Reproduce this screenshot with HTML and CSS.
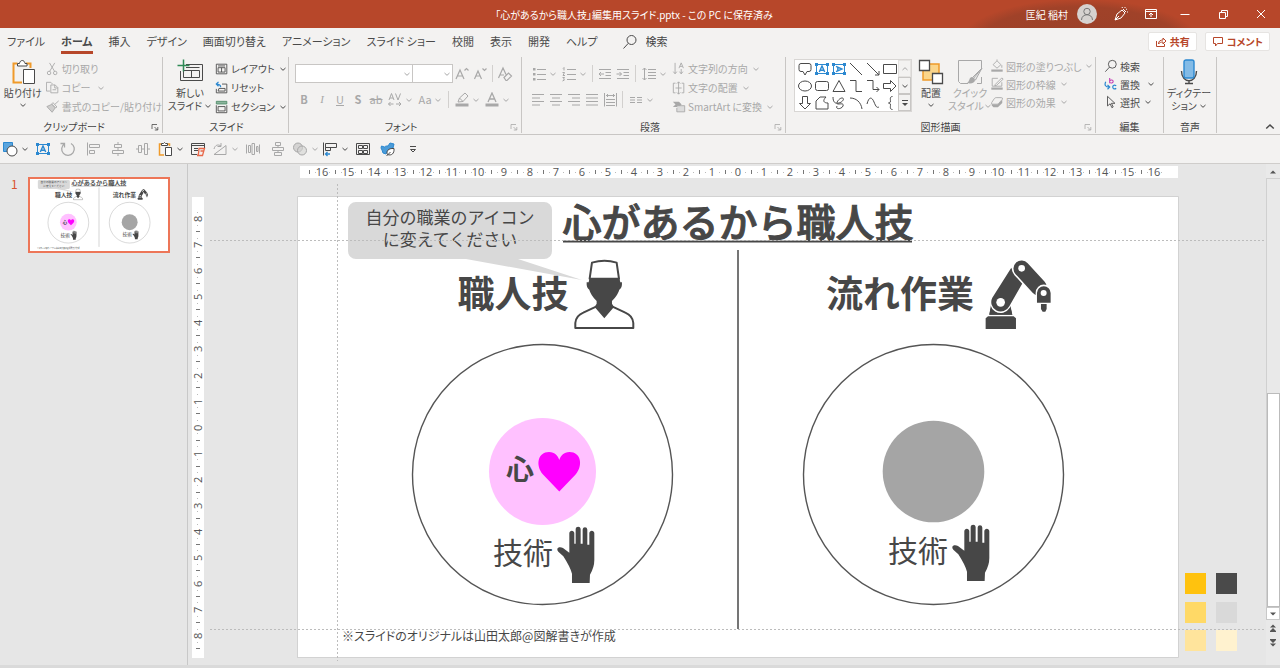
FILE: index.html
```html
<!DOCTYPE html>
<html lang="ja">
<head>
<meta charset="utf-8">
<meta name="viewport" content="width=device-width, initial-scale=1">
<title>「心があるから職人技」編集用スライド.pptx</title>
<link rel="stylesheet" href="styles.css">
</head>
<body>
<svg class="sprite" aria-hidden="true">
  <symbol id="chev" viewBox="0 0 8 8"><path d="M1.5 3l2.5 2.300L6.500 3"/></symbol>
  <symbol id="launch" viewBox="0 0 8 8"><path d="M1 6V1.500h5M3.500 4l3 3M6.800 4v3h-3" stroke-width=".8"/></symbol>
  <symbol id="lens" viewBox="0 0 16 16"><circle cx="9.500" cy="6" r="4.500"/><path d="M6.300 9.300L1.500 14.500"/></symbol>
  <symbol id="textbox" viewBox="0 0 16 16"><g stroke="#2b88d0"><path d="M2.500 3.500h11v9h-11z"/><path d="M5.300 11L8 5l2.700 6M6.300 9.200h3.400" stroke-width="1.400"/></g><path d="M1 2h3v3H1zM12 2h3v3h-3zM1 11h3v3H1zM12 11h3v3h-3z" fill="#2b88d0" stroke="none"/></symbol>
  <symbol id="align-obj" viewBox="0 0 16 16"><path d="M2.500 1.500v13M4.500 3.500h10v3h-10zM4.500 9.500h5v3h-5z"/></symbol>
  <g id="hand"><path d="M262 447C263 441 272 440 279 444L298 458V400C298 390 313 390 313 400V431H317V388C317 378 332 378 332 388V431H338V389C338 379 352 379 352 389V434H358V400C358 390 373 390 373 400V480Q373 502 360 524L359 549H306V521Q300 500 280 469L265 455Q261 451 262 447Z" fill="#474747"/></g>
</svg>

<header class="titlebar">
  <h1 class="doc-title">「心があるから職人技」編集用スライド.pptx - この PC に保存済み</h1>
  <div class="account">
    <span class="user">匡紀 稲村</span>
    <button class="avatar" aria-label="アカウント"><svg viewBox="0 0 20 20"><circle cx="10" cy="10" r="10" fill="#d6d2d0" stroke="none"/><circle cx="10" cy="7.500" r="3.200"/><path d="M4.500 16c0-7 11-7 11 0"/></svg></button>
    <button class="tb" aria-label="ペン"><svg class="ic" viewBox="0 0 16 16"><path d="M2 14l2-6 5-4 3 3-4 5zM2 14l4-4M10 3l3 3M12 1v1M14 3l-1 .5M9 1l.5 1M15 6h-1"/></svg></button>
    <button class="tb" aria-label="リボンの表示オプション"><svg class="ic" viewBox="0 0 16 16"><path d="M2.500 3.500h11v9h-11zM2.500 5.500h11M8 11V7M6 9l2-2 2 2"/></svg></button>
    <button class="win" aria-label="最小化"><svg class="ic" viewBox="0 0 16 16"><path d="M3.500 8.500h9"/></svg></button>
    <button class="win" aria-label="元に戻す"><svg class="ic" viewBox="0 0 16 16"><path d="M4.500 6.500h6v6h-6zM6.500 6V4.500h6v6H11"/></svg></button>
    <button class="win" aria-label="閉じる"><svg class="ic" viewBox="0 0 16 16"><path d="M4 4l8 8M12 4l-8 8"/></svg></button>
  </div>
</header>

<nav class="tabs">
  <button>ファイル</button><button class="active">ホーム</button><button>挿入</button><button>デザイン</button><button>画面切り替え</button><button>アニメーション</button><button>スライド ショー</button><button>校閲</button><button>表示</button><button>開発</button><button>ヘルプ</button>
  <label class="search"><svg class="ic"><use href="#lens"/></svg><input type="search" placeholder="検索" aria-label="検索"></label>
  <button class="pill"><svg class="ic12" viewBox="0 0 12 12"><path d="M1.500 5v5.500h8V8M3.500 8c0-3 2-4 4.500-4V2l3 3-3 3V6c-2 0-3.500.5-4.500 2z"/></svg>共有</button>
  <button class="pill"><svg class="ic12" viewBox="0 0 12 12"><path d="M1.500 1.500h9v6h-5l-2 2.500V7.500h-2z"/></svg>コメント</button>
</nav>

<section class="ribbon" aria-label="リボン">
  <div class="group g-clip">
    <div class="body">
      <button class="big"><svg class="ic26" viewBox="0 0 26 26"><path d="M12 23.500H3.500v-19h4M16 4.500h4.500V9" stroke="#f09a2a" stroke-width="2"/><path d="M7.500 7V4.500h2C10 .5 14.500.5 15 4.500h2V7z" fill="#fff"/><path d="M13.500 10.500h11v14h-11z" fill="#fff"/></svg><span>貼り付け</span><svg class="cv"><use href="#chev"/></svg></button>
      <div class="list off">
        <button><svg class="ic" viewBox="0 0 16 16"><path d="M4 1l6 10M10 1L4 11"/><circle cx="3.500" cy="12.500" r="2"/><circle cx="10.500" cy="12.500" r="2"/></svg>切り取り</button>
        <button><svg class="ic" viewBox="0 0 16 16"><path d="M4.500 11.500h-4v-10h5l2 2M5.500 4.500h5l3 3v6h-8zM10 4.500V8h3.500M7.500 10h4"/></svg>コピー<svg class="cv gap"><use href="#chev"/></svg></button>
        <button><svg class="ic" viewBox="0 0 16 16"><path d="M14.500 1L10 5M8 3l4.500 5-1.500 1L6.500 4.500z" /><path d="M6.500 5L1 7.500 7 14l3.500-5z" fill="#cfcecd"/></svg>書式のコピー/貼り付け</button>
      </div>
    </div>
    <h2>クリップボード</h2><button class="launcher" aria-label="クリップボードの設定"><svg class="cv"><use href="#launch"/></svg></button>
  </div>

  <div class="group g-slide">
    <div class="body">
      <button class="big"><svg class="ic26" viewBox="0 0 26 26"><path d="M9 5.500h16.500v16h-22V12"/><path d="M6.500 11.500h16v7h-16zM14.500 11.500v7M9 8.500h13.500"/><path d="M6.500.5v12M.5 6.500h12" stroke="#2f8a56" stroke-width="1.500"/></svg><span>新しい</span><span>スライド<svg class="cv"><use href="#chev"/></svg></span></button>
      <div class="list">
        <button><svg class="ic" viewBox="0 0 16 16"><path d="M1.500 2.500h12v11h-12zM3.500 4.500h8M3.500 6.500h8v5h-8zM7.500 6.500v5"/></svg>レイアウト<svg class="cv"><use href="#chev"/></svg></button>
        <button><svg class="ic" viewBox="0 0 16 16"><path d="M8 3.500h5.500v10h-12V9M4.500 8.500h7v3h-8z"/><path d="M6.500 7C6.500 4 4.500 3.500 1.500 3.500M4 1L1.500 3.500 4 6" stroke="#2b88d0" stroke-width="1.400"/></svg>リセット</button>
        <button><svg class="ic" viewBox="0 0 16 16"><path d="M1.500 1.500h12v3h-12z" fill="#8bb59c" stroke="#4f8a68"/><path d="M1.500 6v8.500h12V6M3.500 7.500h8v5h-8z"/></svg>セクション<svg class="cv"><use href="#chev"/></svg></button>
      </div>
    </div>
    <h2>スライド</h2>
  </div>

  <div class="group g-font off">
    <div class="body rows">
      <div class="row">
        <span class="combo name"><select aria-label="フォント"><option></option></select><svg class="cv"><use href="#chev"/></svg></span><span class="combo size"><select aria-label="フォント サイズ"><option></option></select><svg class="cv"><use href="#chev"/></svg></span>
        <button class="tool" aria-label="拡大"><svg class="ic" viewBox="0 0 16 16"><path d="M2 13L6 4l4 9M3.500 10h5M10.500 4.500l2-2 2 2" stroke-width="1.200"/></svg></button>
        <button class="tool" aria-label="縮小"><svg class="ic" viewBox="0 0 16 16"><path d="M2.500 13L6 5l3.500 8M3.500 10h5M10.500 2.500l2 2 2-2" stroke-width="1.200"/></svg></button>
        <i class="sep"></i>
        <button class="tool" aria-label="書式のクリア"><svg class="ic" viewBox="0 0 16 16"><path d="M1.500 12L6 2l3 6.500M3 9h4M7 11.500L11.500 7l3 3-4.500 4.500H9z" stroke-width="1.200"/></svg></button>
      </div>
      <div class="row">
        <button class="tool b">B</button><button class="tool i">I</button><button class="tool u">U</button><button class="tool b">S</button><button class="tool s">ab</button>
        <button class="tool wide" aria-label="文字の間隔"><svg class="ic" viewBox="0 0 16 16"><path d="M2 8l2.500-6.500L7 8M3 6h3M8.500 1.500L11 8l2.500-6.500M1.500 12h5M9 12h5M3.500 10l-2 2 2 2M12 10l2 2-2 2"/></svg><svg class="cv"><use href="#chev"/></svg></button>
        <button class="tool wide">Aa<svg class="cv"><use href="#chev"/></svg></button>
        <i class="sep"></i>
        <button class="tool wide" aria-label="蛍光ペン"><svg class="ic" viewBox="0 0 16 16"><path d="M4 10l1.500-4L11 1l3 3-5 5.500zM5.500 6L9 9.500"/><path d="M1.500 11.500h13v3h-13z" class="solid"/></svg><svg class="cv"><use href="#chev"/></svg></button>
        <button class="tool wide" aria-label="フォントの色"><svg class="ic" viewBox="0 0 16 16"><path d="M4 10l4-9 4 9M5.500 7h5" stroke-width="1.300"/><path d="M1.500 11.500h13v3h-13z" class="solid"/></svg><svg class="cv"><use href="#chev"/></svg></button>
      </div>
    </div>
    <h2>フォント</h2><button class="launcher" aria-label="フォントの設定"><svg class="cv"><use href="#launch"/></svg></button>
  </div>

  <div class="group g-para off">
    <div class="body">
      <div class="rows">
        <div class="row">
          <button class="tool wide" aria-label="箇条書き"><svg class="ic" viewBox="0 0 16 16"><path d="M6 3.500h9M6 8.500h9M6 13.500h9"/><path d="M2 2h2.500v2.500H2zM2 7h2.500v2.500H2zM2 12h2.500v2.500H2z" class="solid"/></svg><svg class="cv"><use href="#chev"/></svg></button>
          <button class="tool wide" aria-label="段落番号"><svg class="ic" viewBox="0 0 16 16"><path d="M6 3.500h9M6 8.500h9M6 13.500h9M2 2.500l1-1v3M1.500 6.500h2L2 9.500h2M1.500 11.500h2l-1 1.500 1 1-2 1"/></svg><svg class="cv"><use href="#chev"/></svg></button>
          <i class="sep"></i>
          <button class="tool" aria-label="インデントを減らす"><svg class="ic" viewBox="0 0 16 16"><path d="M2 3.500h12M8.500 6.500H14M8.500 9.500H14M2 12.500h12M7 8H2M4 6L2 8l2 2"/></svg></button>
          <button class="tool" aria-label="インデントを増やす"><svg class="ic" viewBox="0 0 16 16"><path d="M2 3.500h12M8.500 6.500H14M8.500 9.500H14M2 12.500h12M1.500 8h5M4.500 6l2 2-2 2"/></svg></button>
          <i class="sep"></i>
          <button class="tool wide" aria-label="行間"><svg class="ic" viewBox="0 0 16 16"><path d="M7 3.500h8M7 6.500h8M7 9.500h8M7 12.500h8M3.500 2v12M1.500 4l2-2 2 2M1.500 12l2 2 2-2"/></svg><svg class="cv"><use href="#chev"/></svg></button>
        </div>
        <div class="row">
          <button class="tool" aria-label="左揃え"><svg class="ic" viewBox="0 0 16 16"><path d="M2 2.500h12M2 6h8M2 9.500h12M2 13h8"/></svg></button>
          <button class="tool" aria-label="中央揃え"><svg class="ic" viewBox="0 0 16 16"><path d="M2 2.500h12M4 6h8M2 9.500h12M4 13h8"/></svg></button>
          <button class="tool" aria-label="右揃え"><svg class="ic" viewBox="0 0 16 16"><path d="M2 2.500h12M6 6h8M2 9.500h12M6 13h8"/></svg></button>
          <button class="tool" aria-label="両端揃え"><svg class="ic" viewBox="0 0 16 16"><path d="M2 2.500h12M2 6h12M2 9.500h12M2 13h12"/></svg></button>
          <button class="tool" aria-label="均等割り付け"><svg class="ic" viewBox="0 0 16 16"><path d="M2.500 1v13.500M14.500 1v13.500M4 3.500h9M6 2L4.500 3.500 6 5M11 2l1.500 1.500L11 5M4 7.500h9M4 10.500h9M4 13.500h9"/></svg></button>
          <i class="sep"></i>
          <button class="tool wide" aria-label="段組み"><svg class="ic" viewBox="0 0 16 16"><path d="M2 5.500h5M2 8h5M2 10.500h5M9 5.500h5M9 8h5M9 10.500h5"/></svg><svg class="cv"><use href="#chev"/></svg></button>
        </div>
      </div>
      <div class="list">
        <button><svg class="ic" viewBox="0 0 16 16"><path d="M3.500 1v12M1.500 11l2 2.500 2-2.500M10.500 8v5.500M8.500 11l2 2.500 2-2.500M8 7l2.500-6L13 7M9 5h3"/></svg>文字列の方向<svg class="cv"><use href="#chev"/></svg></button>
        <button><svg class="ic" viewBox="0 0 16 16"><path d="M4 2.500H1.500v11H4M11 2.500h2.500v11H11M7.500 1v14M5.500 3l2-2 2 2M5.500 13l2 2 2-2M4 8h7"/></svg>文字の配置<svg class="cv"><use href="#chev"/></svg></button>
        <button><svg class="ic" viewBox="0 0 16 16"><path d="M1 2h7l3 3-3 3H1l3-3z" class="solid"/><path d="M6.500 6.500h8v7h-9V9" fill="#dcdcdc"/></svg>SmartArt に変換<svg class="cv"><use href="#chev"/></svg></button>
      </div>
    </div>
    <h2>段落</h2><button class="launcher" aria-label="段落の設定"><svg class="cv"><use href="#launch"/></svg></button>
  </div>

  <div class="group g-draw">
    <div class="body">
      <div class="gallery">
        <div class="shapes">
          <button aria-label="吹き出し"><svg class="ic" viewBox="0 0 16 16"><path d="M4 2.500h8q2 0 2 2v4q0 2-2 2h-2L8 14l-2-3.500H4q-2 0-2-2v-4q0-2 2-2z"/></svg></button>
          <button aria-label="テキスト ボックス"><svg class="ic"><use href="#textbox"/></svg></button>
          <button aria-label="縦書き"><svg class="ic" viewBox="0 0 16 16"><g stroke="#2b88d0"><path d="M2.500 3.500h11v9h-11z"/><path d="M5 5.300L11 8l-6 2.700M6.800 6.300v3.400" stroke-width="1.400"/></g><path d="M1 2h3v3H1zM12 2h3v3h-3zM1 11h3v3H1zM12 11h3v3h-3z" fill="#2b88d0" stroke="none"/></svg></button>
          <button aria-label="線"><svg class="ic" viewBox="0 0 16 16"><path d="M2 2l12 12"/></svg></button>
          <button aria-label="矢印"><svg class="ic" viewBox="0 0 16 16"><path d="M2 2l12 12M14 10v4h-4"/></svg></button>
          <button aria-label="四角形"><svg class="ic" viewBox="0 0 16 16"><path d="M1.500 3.500h13v9h-13z"/></svg></button>
          <button aria-label="楕円"><svg class="ic" viewBox="0 0 16 16"><ellipse cx="8" cy="8" rx="6.500" ry="5"/></svg></button>
          <button aria-label="角丸四角形"><svg class="ic" viewBox="0 0 16 16"><rect x="1.500" y="3.500" width="13" height="9" rx="2"/></svg></button>
          <button aria-label="三角形"><svg class="ic" viewBox="0 0 16 16"><path d="M8 2.500l6 11H2z"/></svg></button>
          <button aria-label="カギ線"><svg class="ic" viewBox="0 0 16 16"><path d="M2 2.500h6v11h6"/></svg></button>
          <button aria-label="カギ線矢印"><svg class="ic" viewBox="0 0 16 16"><path d="M2 2.500h6v9h6M11.500 9l2.500 2.500-2.500 2.500"/></svg></button>
          <button aria-label="右矢印"><svg class="ic" viewBox="0 0 16 16"><path d="M1.500 5.500h7v-3L14 8l-5.500 5.500v-3h-7z"/></svg></button>
          <button aria-label="下矢印"><svg class="ic" viewBox="0 0 16 16"><path d="M5.500 1.500v7h-3L8 14l5.500-5.500h-3v-7z"/></svg></button>
          <button aria-label="フリーフォーム"><svg class="ic" viewBox="0 0 16 16"><path d="M2 14V6l4-4h6c-4 4-2 6 2 6v6z"/></svg></button>
          <button aria-label="フリーハンド"><svg class="ic" viewBox="0 0 16 16"><path d="M2 2c0 5 2 7 6 6s6-5 3-5-7 6-4 6 6-1 5 2-8 4-6 0"/></svg></button>
          <button aria-label="円弧"><svg class="ic" viewBox="0 0 16 16"><path d="M2 3c6 0 11 4 12 11"/></svg></button>
          <button aria-label="曲線"><svg class="ic" viewBox="0 0 16 16"><path d="M2 9c2-8 5-7 7-2s3 6 5 5"/></svg></button>
          <button aria-label="左中かっこ"><svg class="ic" viewBox="0 0 16 16"><path d="M10.500 1.500c-3 0-2 3-2 4.500S7.500 8 6.500 8c1 0 2 .5 2 2s-1 4.500 2 4.500"/></svg></button>
        </div>
        <div class="pager">
          <button class="dis" aria-label="前へ"><svg class="cv flip"><use href="#chev"/></svg></button>
          <button aria-label="次へ"><svg class="cv"><use href="#chev"/></svg></button>
          <button aria-label="その他"><svg class="cv" viewBox="0 0 8 8"><path d="M1 1.500h6"/><path d="M1 4h6L4 7z" class="solid"/></svg></button>
        </div>
      </div>
      <button class="big arrange"><svg class="ic26" viewBox="0 0 26 26"><path d="M5 5h16v16H5z" fill="#fbd58a" stroke="#f09a2a" stroke-width="1.500"/><path d="M1.500 1.500h10v10h-10zM14.500 14.500h10v10h-10z" fill="#fff" stroke-width="1.300"/></svg><span>配置</span><svg class="cv"><use href="#chev"/></svg></button>
      <button class="big dis quick"><svg class="ic26" viewBox="0 0 26 26"><path d="M11 24.500H3.500L1.500 22.500V1.500h23v8M24.500 18v6.500H20"/><path d="M25 9L16 20M25 9l-6.500 12-3-2.500z" fill="#e8e8e8"/><path d="M15 18c-3 0-2 4-5 6 4 1 8 0 8-3z" class="solid"/></svg><span>クイック</span><span>スタイル<svg class="cv"><use href="#chev"/></svg></span></button>
      <div class="list dis tight">
        <button><svg class="ic" viewBox="0 0 16 16"><path d="M3.500 6.500L8 2l4.500 4.500L8 10.500zM8 2V.5M13.500 7v3"/><path d="M1.500 12h13v2.500h-13z" class="solid"/></svg>図形の塗りつぶし<svg class="cv"><use href="#chev"/></svg></button>
        <button><svg class="ic" viewBox="0 0 16 16"><path d="M9 1.500H2.500v9h11V6M6 8.500L13.500 1l1.500 1.500L7.500 9.500l-2 .5z"/><path d="M1.500 12h13v2.500h-13z" class="solid"/></svg>図形の枠線<svg class="cv"><use href="#chev"/></svg></button>
        <button><svg class="ic" viewBox="0 0 16 16"><path d="M2 9.500V12l2 2h5l5-5V5L9 10.500H3z" class="solid"/><path d="M7 3h6q2 0 1 2L10 9.500q-1 1-2 1H3q-2 0-1-2L5 4q1-1 2-1z" fill="#f3f2f1"/></svg>図形の効果<svg class="cv"><use href="#chev"/></svg></button>
      </div>
    </div>
    <h2>図形描画</h2><button class="launcher dis" aria-label="図形描画の設定"><svg class="cv"><use href="#launch"/></svg></button>
  </div>

  <div class="group g-edit">
    <div class="body">
      <div class="list tight">
        <button><svg class="ic"><use href="#lens"/></svg>検索</button>
        <button><svg class="ic" viewBox="0 0 16 16"><path d="M6.500 1v6M6.500 4.500c1.500-2 4-1 4 .7s-2.500 2.500-4 .8" stroke="#c239b3" stroke-width="1.200"/><path d="M14 10c-3-1.500-4 0-4 1.500s1.500 3 4 1.500M2 5.500c-2 4 0 6 4 6M4 9l2.500 2.500L4 14" stroke="#2b88d0" stroke-width="1.400"/></svg>置換<svg class="cv gap"><use href="#chev"/></svg></button>
        <button><svg class="ic" viewBox="0 0 16 16"><path d="M4 1.500v11l3-2.500 2 4.500 1.500-.8L8.500 9.500h4z"/></svg>選択<svg class="cv"><use href="#chev"/></svg></button>
      </div>
    </div>
    <h2>編集</h2>
  </div>

  <div class="group g-voice">
    <div class="body">
      <button class="big"><svg class="ic26" viewBox="0 0 26 26"><path d="M5.500 12c0 13 15 13 15 0M13 22v3M9 24.500h8" stroke-width="1.400"/><rect x="8" y="1" width="10" height="18" rx="2" fill="#83bbe6" stroke="#2b88d0" stroke-width="1.400"/></svg><span>ディクテー</span><span>ション<svg class="cv"><use href="#chev"/></svg></span></button>
    </div>
    <h2>音声</h2>
  </div>
  <button class="collapse" aria-label="リボンを折りたたむ"><svg class="ic12 flip" viewBox="0 0 8 8"><use href="#chev"/></svg></button>
</section>

<div class="qat" role="toolbar" aria-label="クイック アクセス">
  <button class="split" aria-label="図形"><svg class="ic" viewBox="0 0 16 16"><path d="M1.500 1.500h9v9h-9z" fill="#5aa5de" stroke="#2b88d0"/><circle cx="10" cy="10" r="5" fill="#fff"/></svg><svg class="cv"><use href="#chev"/></svg></button>
  <button aria-label="テキスト ボックス"><svg class="ic"><use href="#textbox"/></svg></button>
  <button class="dis" aria-label="繰り返し"><svg class="ic" viewBox="0 0 16 16"><path d="M11 2.500a6.300 6.300 0 1 1-6.500.3M4.500 6.500v-4h-4" stroke-width="1.300"/></svg></button>
  <button class="dis" aria-label="左揃え"><svg class="ic"><use href="#align-obj"/></svg></button>
  <button class="dis" aria-label="左右中央揃え"><svg class="ic" viewBox="0 0 16 16"><path d="M8 1v2M8 7v2M8 13v2M4.500 3.500h7v3h-7zM2.500 9.500h11v3h-11z"/></svg></button>
  <button class="dis" aria-label="上下中央揃え"><svg class="ic" viewBox="0 0 16 16"><path d="M1 8h2M7 8h2M13 8h2M3.500 4.500h3v7h-3zM9.500 2.500h3v11h-3z"/></svg></button>
  <button class="split" aria-label="貼り付け"><svg class="ic" viewBox="0 0 16 16"><path d="M7 14H2.500V3H5M10 3h2.500v2" stroke="#f09a2a" stroke-width="1.500"/><path d="M4.500 4.500v-2h2q1-2 2 0h2v2zM8.500 6.500h6v8h-6z" fill="#fff"/></svg><svg class="cv"><use href="#chev"/></svg></button>
  <button aria-label="選択ウィンドウ"><svg class="ic" viewBox="0 0 16 16"><path d="M7 13.500H1.500v-11h13V7M1.500 4.500h13M4 7.500h4M4 9.500h4"/><path d="M9 7.500h5.500l-2 7H7c2 0 1.500-3 2-7zM10.500 10h3" stroke="#e8684a" stroke-width="1.300"/></svg></button>
  <button class="split dis" aria-label="回転"><svg class="ic" viewBox="0 0 16 16"><path d="M2 13.500h12v-9zM2 8c1-4 4-5 7-3M9 2v3.500H5.500"/></svg><svg class="cv"><use href="#chev"/></svg></button>
  <button class="dis" aria-label="左右に整列"><svg class="ic" viewBox="0 0 16 16"><path d="M1.500 3.500v9M14.500 3.500v9M3.500 4.500h2v7h-2zM7 2.500h2.500v11H7zM11.500 5.500h1.500v5h-1.500z"/></svg></button>
  <button class="dis" aria-label="上下に整列"><svg class="ic" viewBox="0 0 16 16"><path d="M8 4.500v2M8 9.500v2M5.500 1.500h5v3h-5zM2.500 6.500h11v3h-11zM4.500 11.500h7v3h-7z"/></svg></button>
  <button class="split dis" aria-label="図形の結合"><svg class="ic" viewBox="0 0 16 16"><g fill="#d4d3d2"><circle cx="6" cy="6.500" r="4.500"/><circle cx="10" cy="9.500" r="4.500" fill-opacity=".6"/></g></svg><svg class="cv"><use href="#chev"/></svg></button>
  <button class="split" aria-label="オブジェクトの配置"><svg class="ic" viewBox="0 0 16 16"><path d="M1.500 1.500v13M3.500 2.500h11v4h-11zM3.500 6.500h5v3h-5z"/><path d="M8 13H3.500M5.500 11l-2 2 2 2" stroke="#2b88d0" stroke-width="1.300"/></svg><svg class="cv"><use href="#chev"/></svg></button>
  <button aria-label="一覧"><svg class="ic" viewBox="0 0 16 16"><path d="M1.500 2.500h13v11h-13zM3.500 4.500h4v3h-4zM8.500 4.500h4v3h-4zM3.500 9.500h4v3h-4zM8.500 9.500h4v3h-4z"/></svg></button>
  <button aria-label="図形の変更"><svg class="ic" viewBox="0 0 16 16"><path d="M1.500 5l3 1c1-1 2-1 3.500-1l2-3 4 1-1 4-6 3 -1 3-3-1-1-3L1 7z" fill="#4a9bd8" stroke="#2b88d0"/><path d="M14 7.500c-6-.5-8 3-6.500 6 4 1.500 7-1 6.500-6zM6.500 15l4-4" fill="#fff"/></svg></button>
  <button aria-label="カスタマイズ"><svg class="cv" viewBox="0 0 8 8"><path d="M1 1.500h6M1.500 4.500h5L4 7z"/></svg></button>
</div>

<main class="workspace">
  <aside class="thumbs">
    <span class="num">1</span>
    <button class="thumb" aria-label="スライド 1"><svg viewBox="298 196 880 462"><use href="#slide-art"/></svg></button>
  </aside>
  <section class="editor">
    <div class="hruler"><span>16</span><span>15</span><span>14</span><span>13</span><span>12</span><span>11</span><span>10</span><span>9</span><span>8</span><span>7</span><span>6</span><span>5</span><span>4</span><span>3</span><span>2</span><span>1</span><span>0</span><span>1</span><span>2</span><span>3</span><span>4</span><span>5</span><span>6</span><span>7</span><span>8</span><span>9</span><span>10</span><span>11</span><span>12</span><span>13</span><span>14</span><span>15</span><span>16</span></div>
    <div class="vruler"><span>8</span><span>7</span><span>6</span><span>5</span><span>4</span><span>3</span><span>2</span><span>1</span><span>0</span><span>1</span><span>2</span><span>3</span><span>4</span><span>5</span><span>6</span><span>7</span><span>8</span></div>
    <svg class="slide" viewBox="298 196 880 462" role="img" aria-label="スライド">
      <g id="slide-art">
        <rect x="298" y="196" width="880" height="462" fill="#fff"/>
        <path class="note-shape" d="M356 202H544a8 8 0 0 1 8 8V251a8 8 0 0 1-8 8H518L582 280L466 259H356a8 8 0 0 1-8-8V210a8 8 0 0 1 8-8z"/>
        <text class="t-note"><tspan x="450" y="224">自分の職業のアイコン</tspan><tspan x="450" y="246">に変えてください</tspan></text>
        <text class="t-title" x="738" y="237">心があるから職人技</text>
        <path d="M563 241.500H912" stroke="#474747" stroke-width="2"/>
        <text class="t-head" x="513" y="308">職人技</text>
        <text class="t-head" x="900" y="308">流れ作業</text>
        <path d="M738 250V629" stroke="#474747" stroke-width="1.500"/>
        <circle cx="542.500" cy="474.500" r="130" class="ring"/>
        <circle cx="933.500" cy="474.500" r="130" class="ring"/>
        <circle cx="542.500" cy="471.500" r="53.500" fill="#ffc1ff"/>
        <circle cx="933.500" cy="471.500" r="50.800" fill="#a5a5a5"/>
        <path d="M559.300 491.500L543 474.500C535 465 538 452 549 452C555 452 558 456 559.300 460C560.600 456 563.600 452 569.600 452C580.600 452 583.600 465 575.600 474.500Z" fill="#f0f"/>
        <text class="t-heart" x="520" y="480">心</text>
        <text class="t-skill" x="523" y="564">技術</text>
        <text class="t-skill" x="918" y="562">技術</text>
        <use href="#hand" transform="translate(470 400) scale(.3333)"/>
        <use href="#hand" transform="translate(865 398) scale(.3333)"/>
        <text class="t-foot" x="342" y="641">※スライドのオリジナルは山田太郎@図解書きが作成</text>
        <!-- craftsman -->
        <g transform="translate(340 165) scale(.3333)" stroke="#474747" stroke-linejoin="round">
          <path d="M706 489V474Q708 452 730 443L770 424H816L856 443Q878 452 880 474V489Z" fill="#fff" stroke-width="6"/>
          <path d="M764 426L770 416V408Q752 390 748 374Q739 370 740 352H746L749 338H838L841 352H846Q847 370 838 374Q834 390 816 408V416L822 426L793 460Z" fill="#474747" stroke="none"/>
          <path d="M749 341L756 293Q794 282 830 293L837 341Z" fill="#fff" stroke-width="6"/>
        </g>
        <!-- robot arm -->
        <g transform="translate(780 165) scale(.3333)" fill="#474747">
          <path d="M628 449L633 420H691L697 449Z"/>
          <path d="M662 412L714 326" stroke="#fff" stroke-width="64" stroke-linecap="round"/>
          <path d="M628 449L632 430Q662 464 692 430L697 449Z"/>
          <path d="M617 492V460L624 454H701L708 460V492Z"/>
          <path d="M637 398L694 308Q702 334 730 350L688 424A28 28 0 1 1 637 398Z"/>
          <path d="M725 311L782 374" stroke="#fff" stroke-width="58" stroke-linecap="round"/>
          <path d="M725 311L776 367" stroke="#474747" stroke-width="49" stroke-linecap="round"/>
          <path d="M767 418V383a24 24 0 0 1 49 0V418Z" fill="#fff"/>
          <path d="M771 413V384a20 20 0 0 1 41 0V413ZM783 417H800V432L796 440H788L783 432Z"/>
          <circle cx="725" cy="310" r="10" fill="#fff"/><circle cx="662" cy="412" r="13" fill="#fff"/><circle cx="791" cy="384" r="9" fill="#fff"/>
        </g>
      </g>
      <path d="M297.500 658V196.500H1178.500V657.500H298" class="edge"/>
      <g stroke="none">
        <path d="M1185 573h21v21h-21z" fill="#ffc20e"/><path d="M1216 573h21v21h-21z" fill="#4a4a4a"/>
        <path d="M1185 602h21v21h-21z" fill="#ffd966"/><path d="M1216 602h21v21h-21z" fill="#d9d9d9"/>
        <path d="M1185 630h21v21h-21z" fill="#ffe49c"/><path d="M1216 630h21v21h-21z" fill="#fff2cf"/>
      </g>
      <path class="guide" d="M210 240.500H1264M210 629.500H1264M337.500 184V661"/>
    </svg>
    <div class="scroll">
      <button aria-label="上へ"><svg viewBox="0 0 8 8"><path d="M1 5.500h6L4 2.500z"/></svg></button>
      <div class="track"><div class="knob"></div></div>
      <button class="box" aria-label="下へ"><svg viewBox="0 0 8 8"><path d="M1 2.500h6L4 5.500z"/></svg></button>
      <button class="jump" aria-label="前のスライド"><svg viewBox="0 0 8 8"><path d="M1 3.500h6L4 .5zM1 7h6L4 4zM1 7h6v1H1z"/></svg></button>
      <button class="jump" aria-label="次のスライド"><svg viewBox="0 0 8 8"><path d="M1 0h6v1H1zM1 1h6L4 4zM1 4.500h6L4 7.500z"/></svg></button>
    </div>
  </section>
</main>
</body>
</html>
```

FILE: styles.css
```css
* { box-sizing: border-box; }

body {
  margin: 0;
  min-height: 100vh;
  display: flex;
  flex-direction: column;
  background: #e6e6e6;
  color: #4a4a4a;
  font: 10px/13px "Noto Sans CJK JP", sans-serif;
  font-feature-settings: "palt";
}

button, input, select {
  margin: 0;
  padding: 0;
  border: 0;
  background: none;
  color: inherit;
  font: inherit;
  font-feature-settings: inherit;
}

button { display: flex; align-items: center; justify-content: center; white-space: nowrap; }

svg { display: block; flex: none; fill: none; stroke: currentColor; }
.sprite { position: absolute; width: 0; height: 0; }
.solid { fill: currentColor; stroke: none; }
.ic { width: 16px; height: 16px; }
.ic12 { width: 12px; height: 12px; }
.ic26 { width: 26px; height: 26px; }
.cv { width: 8px; height: 8px; }
.flip { transform: rotate(180deg); }
.off, .dis { color: #a8a8a8; }

/* title bar */
.titlebar {
  display: grid;
  grid-template-columns: 1fr auto 1fr;
  align-items: center;
  height: 28px;
  background: radial-gradient(ellipse at 50% 50%, #9a4028 0, #a04229 60%, #b7472a 72%) right 80px top / 240px 90px no-repeat, #b7472a;
  color: #fff;
}
.doc-title { grid-column: 2; margin: 0 12px 0 0; font-size: 10px; font-weight: 400; }
.account { display: flex; justify-content: flex-end; align-items: center; }
.avatar { width: 38px; color: #777; }
.avatar svg { width: 20px; height: 20px; }
.tb { width: 30px; height: 28px; }
.win { width: 38px; height: 28px; }

/* tabs */
.tabs {
  display: flex;
  align-items: center;
  gap: 16px;
  height: 27px;
  padding: 0 10px 0 7px;
  background: #f3f2f1;
  font-size: 11px;
}
.tabs button { height: 24px; }
.tabs .active { font-weight: 700; border-bottom: 3px solid #b7472a; padding-top: 3px; }
.search { display: flex; align-items: center; gap: 8px; margin: 0 auto 0 8px; }
.search input { width: 60px; outline: 0; }
.search input::placeholder { color: #444; opacity: 1; }
.tabs .pill {
  height: 19px;
  gap: 3px;
  padding: 0 6px;
  margin-left: -8px;
  background: #fff;
  border: 1px solid #e6e4e2;
  border-radius: 2px;
  color: #b7472a;
  font-size: 10px;
  font-weight: 700;
}

/* ribbon */
.ribbon {
  display: flex;
  height: 80px;
  padding: 2px 0 1px;
  background: #f3f2f1;
  border-bottom: 1px solid #c8c6c4;
}
.group {
  display: flex;
  flex-direction: column;
  position: relative;
  border-right: 1px solid #c8c6c4;
}
.body { flex: 1; display: flex; align-items: flex-start; }
.group h2 { margin: 0; font-size: 10px; line-height: 12px; font-weight: 400; text-align: center; color: #444; }
.launcher { position: absolute; right: 3px; bottom: 2px; }
.g-clip { width: 163px; }
.g-slide { width: 126px; padding-left: 2px; }
.g-font { width: 233px; padding-left: 6px; }
.g-para { width: 264px; padding-left: 7px; }
.g-draw { width: 310px; padding-left: 8px; }
.g-edit { width: 68px; padding-left: 8px; }
.g-voice { width: 53px; }
.g-draw h2, .g-edit h2 { margin-left: -8px; }
.g-font h2, .g-para h2 { margin-left: -14px; }
.g-clip h2 { margin-right: 14px; }
.collapse { margin: auto 4px 0 auto; }

.big { flex-direction: column; justify-content: flex-start; width: 50px; padding-top: 2px; }
.big span { display: flex; align-items: center; gap: 2px; }
.big > .cv { margin-top: 2px; }
.big > .ic26 { margin-bottom: 1px; }
.arrange { width: 38px; }
.quick { width: 40px; }
.quick span { gap: 0; }

.list { display: flex; flex-direction: column; margin-top: 2px; }
.list button { justify-content: flex-start; height: 19px; gap: 1px; }
.list .cv { margin-left: 3px; }
.list .cv.gap { margin-left: 6px; }
.list .ic { width: 14px; height: 14px; margin-right: 1px; }
.list.tight { margin-top: 0; }
.list.tight button { height: 18px; }

.rows { display: flex; flex-direction: column; align-items: flex-start; gap: 5px; padding-top: 6px; }
.row { display: flex; align-items: center; height: 21px; }
.tool { width: 18px; height: 20px; font-size: 11px; }
.tool.wide { width: 30px; gap: 2px; }
.tool .ic { width: 16px; height: 16px; }
.b { font-weight: 700; }
.i { font-style: italic; font-family: "Liberation Serif", serif; }
.u { text-decoration: underline; }
.s { text-decoration: line-through; }
.sep { width: 1px; height: 17px; margin: 0 3px; background: #d2d0ce; }
.g-para .rows { width: 143px; }
.combo { display: flex; align-items: center; height: 19px; padding-right: 1px; border: 1px solid #c8c6c4; background: #fff; }
.combo select { flex: 1; width: 0; appearance: none; }
.combo.name { width: 118px; }
.combo.size { width: 41px; margin-left: -1px; }

.gallery { display: flex; margin-top: 2px; border: 1px solid #d8d6d4; background: #fff; }
.shapes { display: grid; grid-template-columns: repeat(6, 17px); grid-auto-rows: 17px; padding-left: 1px; }
.pager { display: grid; width: 13px; }
.pager button { border: 1px solid #c8c6c4; background: #f3f2f1; }
.pager .dis { border-color: #e4e2e0; }

/* quick access bar */
.qat {
  display: flex;
  height: 29px;
  background: #f3f2f1;
  border-bottom: 1px solid #cfcdcb;
}
.qat button { width: 25px; }
.qat .split { width: 30px; gap: 3px; }
.qat .ic { width: 16px; height: 16px; }

/* workspace */
.workspace { flex: 1; display: flex; border-bottom: 3px solid #dadada; }
.thumbs { display: flex; align-items: flex-start; width: 188px; padding: 13px 0 0 11px; border-right: 1px solid #c8c8c8; color: #d9532f; }
.num { width: 17px; font-size: 12px; }
.thumb { width: 142px; border: 2px solid #ed7658; background: #fff; color: #474747; }
.thumb svg { width: 100%; }

.editor {
  flex: 1;
  display: grid;
  grid-template-columns: 22px 88px 1fr 88px 14px;
  grid-template-rows: 32px auto 1fr;
  min-width: 0;
}
.hruler, .vruler {
  display: flex;
  background: #fff;
  color: #555;
  font: 11px/12px "Open Sans", sans-serif;
  text-align: center;
}
.hruler {
  grid-area: 1 / 3;
  height: 12px;
  margin: 2px 0 0 2px;
  padding: 0 11px 0 9px;
}
.hruler span {
  flex: 1;
  background:
    linear-gradient(#777, #777) 0 4px / 1px 4px no-repeat,
    linear-gradient(#bbb, #bbb) 25% 6px / 1px 1px no-repeat,
    linear-gradient(#bbb, #bbb) 78% 6px / 1px 1px no-repeat;
}
.vruler {
  grid-area: 2 / 1;
  flex-direction: row-reverse;
  width: 12px;
  margin: 1px 0 0 4px;
  padding: 9px 0;
  writing-mode: vertical-rl;
  transform: rotate(180deg);
}
.vruler span {
  flex: 1;
  background:
    linear-gradient(#777, #777) 4px 0 / 4px 1px no-repeat,
    linear-gradient(#bbb, #bbb) 6px 25% / 1px 1px no-repeat,
    linear-gradient(#bbb, #bbb) 6px 78% / 1px 1px no-repeat;
}
.slide { grid-area: 2 / 3; width: 100%; overflow: visible; }

.scroll { grid-area: 1 / 5 / 4; display: flex; flex-direction: column; padding-top: 1px; background: #e9e9e9; }
.scroll button { height: 13px; }
.scroll svg { width: 8px; height: 8px; fill: #555; stroke: none; }
.track { flex: 1; display: flex; flex-direction: column; border: 1px solid #d0d0d0; border-width: 1px 0 0 1px; }
.knob { height: 50%; margin-top: auto; background: #fff; border: 1px solid #bbb; }
.scroll .box { background: #fff; border: 1px solid #c8c8c8; }
.scroll .jump { height: 15px; }
.scroll .jump:last-child { margin-bottom: 15px; }

/* slide artwork */
.edge { stroke: #d2d2d2; }
.guide { stroke: #bcbcbc; stroke-dasharray: 2 2; }
.ring { stroke: #555; stroke-width: 1.4; fill: none; }
.note-shape { fill: #d9d9d9; stroke: none; }
#slide-art { stroke: none; }
#slide-art text { fill: #474747; text-anchor: middle; font-feature-settings: normal; }
#slide-art .t-note { font-size: 17px; }
#slide-art .t-title { font-size: 39px; font-weight: 500; stroke: #474747; stroke-width: 1px; }
#slide-art .t-head { font-size: 37px; font-weight: 700; }
#slide-art .t-heart { font-size: 28px; font-weight: 700; }
#slide-art .t-skill { font-size: 30px; }
#slide-art .t-foot { font-size: 12px; text-anchor: start; font-feature-settings: "palt"; }
```
